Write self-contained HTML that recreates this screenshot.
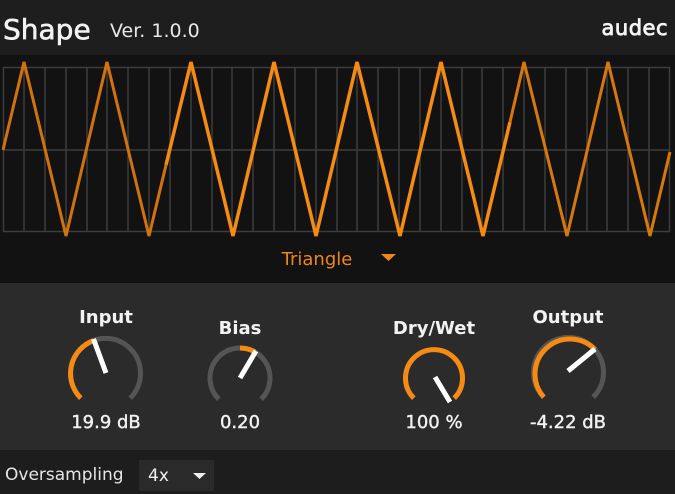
<!DOCTYPE html>
<html><head><meta charset="utf-8"><style>
html,body{margin:0;padding:0;width:675px;height:494px;overflow:hidden;background:#2a2a2a;font-family:"Liberation Sans",sans-serif}
</style></head><body>
<svg width="675" height="494" viewBox="0 0 675 494" xmlns="http://www.w3.org/2000/svg" style="display:block">
<rect x="0" y="0" width="675" height="55" fill="#1e1e1e"/>
<rect x="0" y="55" width="675" height="228" fill="#121212"/>
<rect x="0" y="283" width="675" height="167" fill="#2b2b2b"/>
<rect x="0" y="450" width="675" height="44" fill="#1d1d1d"/>
<text x="3" y="39" font-size="28" fill="#f2f2f2" stroke="#f2f2f2" stroke-width="0.6" font-family="DejaVu Sans">Shape</text>
<text x="110" y="37" font-size="19" fill="#e8e8e8" font-family="DejaVu Sans">Ver. 1.0.0</text>
<text x="668" y="35" font-size="21" fill="#f4f4f4" stroke="#f4f4f4" stroke-width="0.8" text-anchor="end" font-family="DejaVu Sans" letter-spacing="0.5">audec</text>
<g stroke="#3c3c3c" stroke-width="1.5" fill="none">
<rect x="3.5" y="67.5" width="666" height="164"/>
<line x1="3.5" y1="150" x2="669.5" y2="150"/>
<line x1="24" y1="67" x2="24" y2="231"/><line x1="45" y1="67" x2="45" y2="231"/><line x1="66" y1="67" x2="66" y2="231"/><line x1="87" y1="67" x2="87" y2="231"/><line x1="107" y1="67" x2="107" y2="231"/><line x1="128" y1="67" x2="128" y2="231"/><line x1="149" y1="67" x2="149" y2="231"/><line x1="170" y1="67" x2="170" y2="231"/><line x1="191" y1="67" x2="191" y2="231"/><line x1="212" y1="67" x2="212" y2="231"/><line x1="232" y1="67" x2="232" y2="231"/><line x1="253" y1="67" x2="253" y2="231"/><line x1="274" y1="67" x2="274" y2="231"/><line x1="295" y1="67" x2="295" y2="231"/><line x1="316" y1="67" x2="316" y2="231"/><line x1="337" y1="67" x2="337" y2="231"/><line x1="357" y1="67" x2="357" y2="231"/><line x1="378" y1="67" x2="378" y2="231"/><line x1="399" y1="67" x2="399" y2="231"/><line x1="420" y1="67" x2="420" y2="231"/><line x1="441" y1="67" x2="441" y2="231"/><line x1="462" y1="67" x2="462" y2="231"/><line x1="482" y1="67" x2="482" y2="231"/><line x1="503" y1="67" x2="503" y2="231"/><line x1="524" y1="67" x2="524" y2="231"/><line x1="545" y1="67" x2="545" y2="231"/><line x1="566" y1="67" x2="566" y2="231"/><line x1="587" y1="67" x2="587" y2="231"/><line x1="607" y1="67" x2="607" y2="231"/><line x1="628" y1="67" x2="628" y2="231"/><line x1="649" y1="67" x2="649" y2="231"/>
</g>
<polyline fill="none" stroke="#cf720f" stroke-width="3" points="3,150 24,62 66,236 107,62 149,236 166,165"/>
<polyline fill="none" stroke="#f58a14" stroke-width="3.5" points="166,165 191,62 233,236 274,62 316,236 357,62 400,236 441,62 483,236 510,122"/>
<polyline fill="none" stroke="#d6770f" stroke-width="3" points="510,122 524,62 567,236 608,62 650,236 670,152"/>
<text x="317" y="265" font-size="18" fill="#f0861a" text-anchor="middle" font-family="DejaVu Sans">Triangle</text>
<polygon points="381,254 396,254 388.5,261" fill="#f0861a"/>
<g font-size="18" fill="#f2f2f2" text-anchor="middle" font-family="DejaVu Sans">
<g font-weight="bold"><text x="106" y="323">Input</text><text x="240" y="334">Bias</text><text x="434" y="334">Dry/Wet</text><text x="568" y="323">Output</text></g>
<g stroke="#f2f2f2" stroke-width="0.4"><text x="106" y="428">19.9 dB</text><text x="240" y="428">0.20</text><text x="434" y="428">100 %</text><text x="568" y="428">-4.22 dB</text></g>
</g>
<g fill="none" stroke-width="5">
<path d="M80.8,398.2 A35,35 0 1 1 130.2,398.2" stroke="#555"/>
<path d="M80.8,398.2 A35,35 0 0 1 93.5,340.6" stroke="#f58a14"/>
<path d="M218.8,399.2 A30,30 0 1 1 261.2,399.2" stroke="#555"/>
<path d="M240,348 A30,30 0 0 1 255,352" stroke="#f58a14"/>
<path d="M413.8,398.2 A28.5,28.5 0 1 1 454.2,398.2" stroke="#f58a14"/>
<path d="M543.8,397.2 A35,35 0 1 1 593.2,397.2" stroke="#555"/>
<path d="M543.8,397.2 A35,35 0 0 1 595,349.5" stroke="#f58a14"/>
</g>
<g stroke="#fff" stroke-width="5">
<line x1="106" y1="373" x2="93.5" y2="339"/>
<line x1="240" y1="378" x2="256" y2="351"/>
<line x1="435" y1="377" x2="450" y2="402"/>
<line x1="568" y1="371" x2="595" y2="349"/>
</g>
<text x="5" y="480" font-size="17" fill="#e6e6e6" font-family="DejaVu Sans">Oversampling</text>
<rect x="139" y="460" width="75" height="31" rx="2" fill="#2a2a2a"/>
<text x="148" y="481" font-size="17" fill="#f0f0f0" font-family="DejaVu Sans">4x</text>
<polygon points="193,473 206,473 199.5,479" fill="#eee"/>
</svg>
</body></html>
